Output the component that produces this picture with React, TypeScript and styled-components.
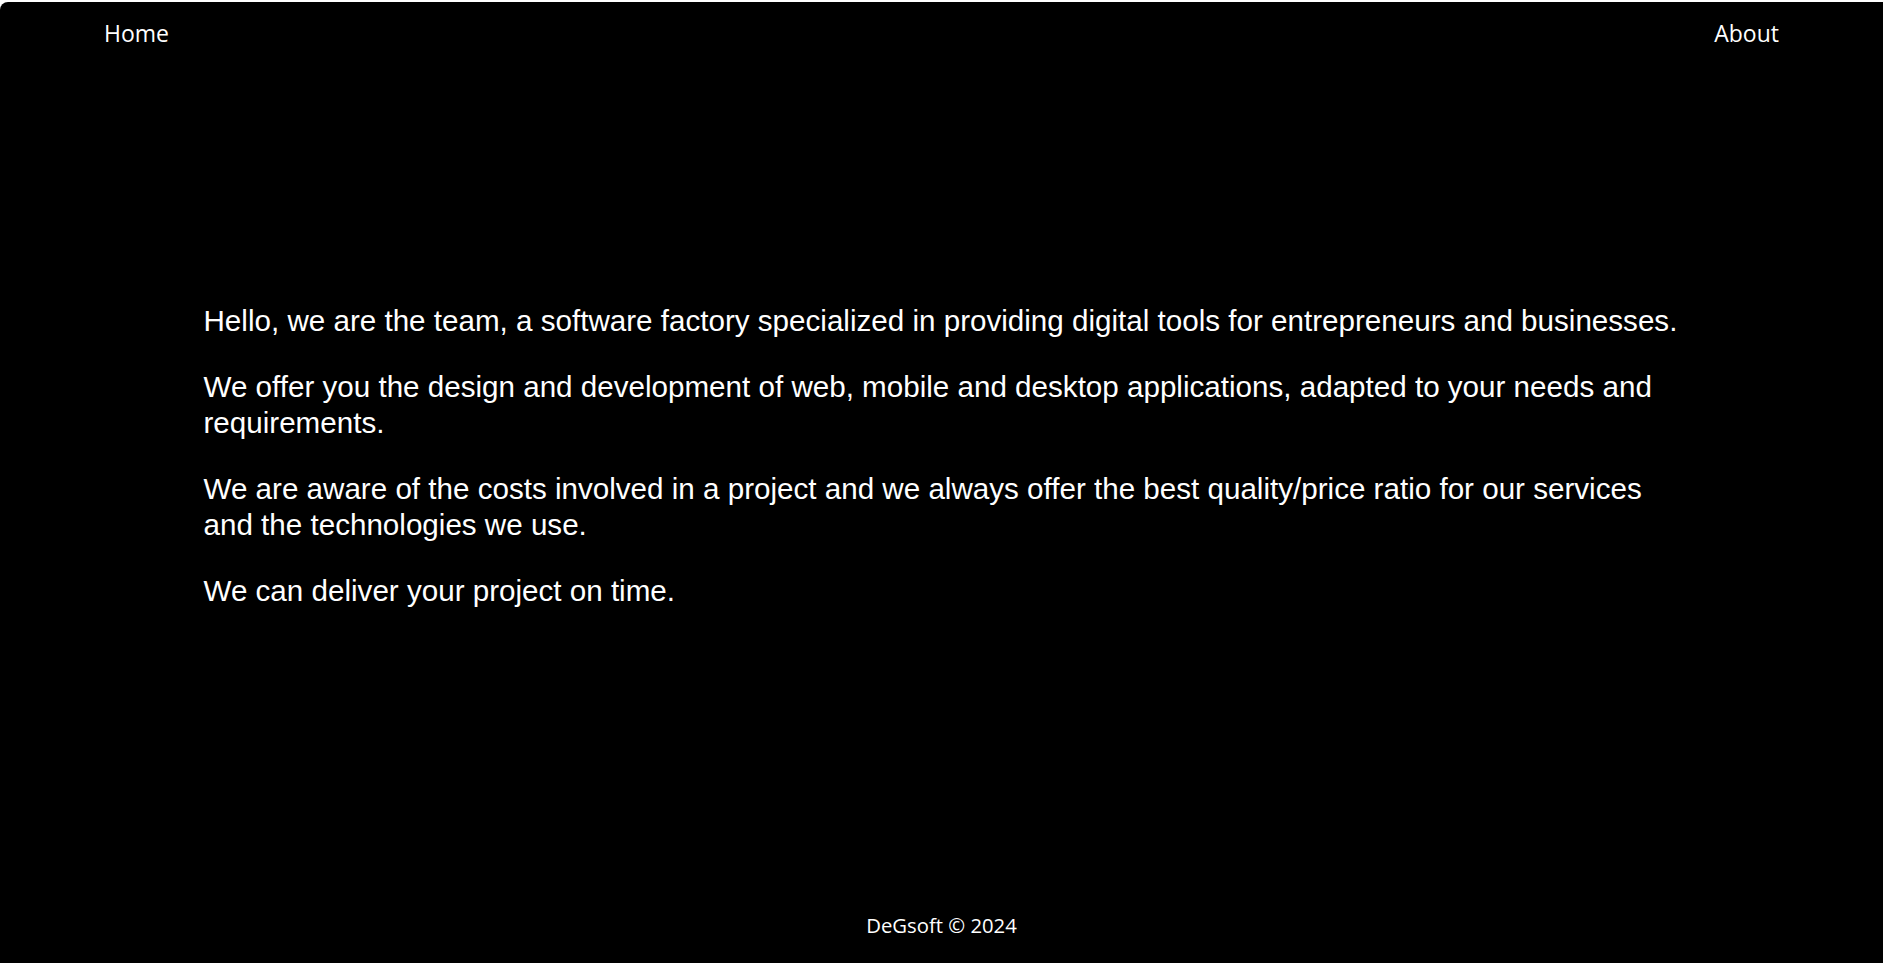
import React from "react";
import styled, { createGlobalStyle } from "styled-components";

const GlobalStyle = createGlobalStyle`
  html, body {
    margin: 0;
    padding: 0;
    background: #ffffff;
  }
  body {
    padding-top: 2px;
  }
  * { box-sizing: border-box; }
`;

const Page = styled.div`
  min-height: calc(100vh - 2px);
  background: #000000;
  color: #ffffff;
  border-top-left-radius: 8px;
  display: flex;
  flex-direction: column;
`;

const Nav = styled.nav`
  display: flex;
  justify-content: space-between;
  align-items: flex-start;
  padding: 16px 104px 0 104px;
  height: 56px;
`;

const NavLink = styled.a`
  font-family: "Open Sans", "Noto Sans", sans-serif;
  font-size: 23px;
  line-height: 30px;
  color: #ffffff;
  text-decoration: none;
  cursor: pointer;
`;

const Main = styled.main`
  flex: 1;
  padding-top: 245px;
`;

const Content = styled.section`
  max-width: 1476px;
  margin: 0 auto;
`;

const Paragraph = styled.p`
  font-family: "Liberation Sans", Arial, sans-serif;
  font-size: 29.6px;
  line-height: 36px;
  margin: 0 0 30px;
`;

const Footer = styled.footer`
  text-align: center;
  font-family: "Open Sans", "Noto Sans", sans-serif;
  font-size: 20.3px;
  line-height: 28px;
  padding: 0 0 24px;
`;

export default function App() {
  return (
    <>
      <GlobalStyle />
      <Page>
        <Nav>
          <NavLink>Home</NavLink>
          <NavLink>About</NavLink>
        </Nav>
        <Main>
          <Content>
            <Paragraph>
              Hello, we are the team, a software factory specialized in providing digital tools for entrepreneurs and businesses.
            </Paragraph>
            <Paragraph>
              We offer you the design and development of web, mobile and desktop applications, adapted to your needs and requirements.
            </Paragraph>
            <Paragraph>
              We are aware of the costs involved in a project and we always offer the best quality/price ratio for our services and the technologies we use.
            </Paragraph>
            <Paragraph>We can deliver your project on time.</Paragraph>
          </Content>
        </Main>
        <Footer>DeGsoft © 2024</Footer>
      </Page>
    </>
  );
}
